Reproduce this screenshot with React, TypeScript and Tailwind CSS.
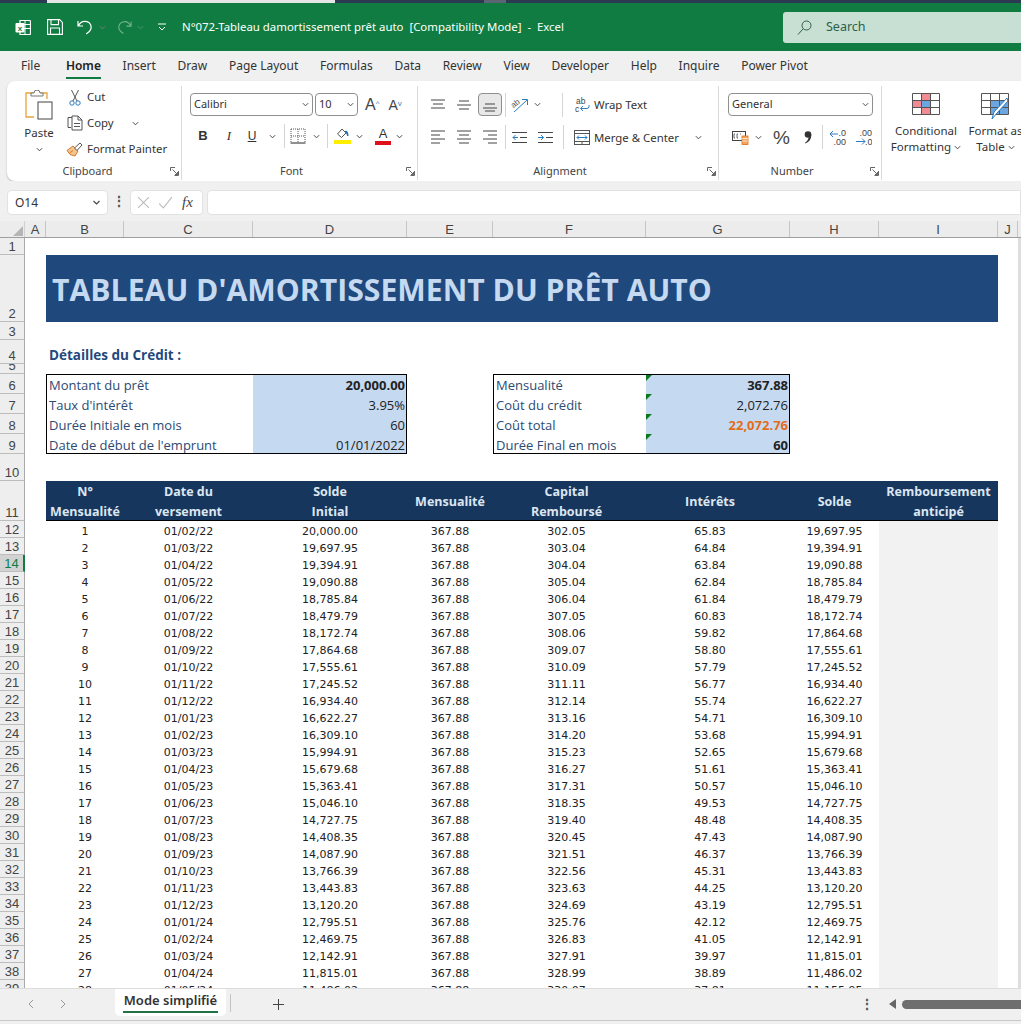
import type { ReactNode } from "react";

const UI = "font-['Noto_Sans',sans-serif]";
const COLS = "grid grid-cols-[25px_21px_78px_129px_154px_86px_153px_144px_89px_119px_20px] grid-rows-[minmax(0,1fr)]";

// n, date, opening, capital, interest, closing
const rows: [number, string, string, string, string, string][] = [
  [1, "01/02/22", "20,000.00", "302.05", "65.83", "19,697.95"],
  [2, "01/03/22", "19,697.95", "303.04", "64.84", "19,394.91"],
  [3, "01/04/22", "19,394.91", "304.04", "63.84", "19,090.88"],
  [4, "01/05/22", "19,090.88", "305.04", "62.84", "18,785.84"],
  [5, "01/06/22", "18,785.84", "306.04", "61.84", "18,479.79"],
  [6, "01/07/22", "18,479.79", "307.05", "60.83", "18,172.74"],
  [7, "01/08/22", "18,172.74", "308.06", "59.82", "17,864.68"],
  [8, "01/09/22", "17,864.68", "309.07", "58.80", "17,555.61"],
  [9, "01/10/22", "17,555.61", "310.09", "57.79", "17,245.52"],
  [10, "01/11/22", "17,245.52", "311.11", "56.77", "16,934.40"],
  [11, "01/12/22", "16,934.40", "312.14", "55.74", "16,622.27"],
  [12, "01/01/23", "16,622.27", "313.16", "54.71", "16,309.10"],
  [13, "01/02/23", "16,309.10", "314.20", "53.68", "15,994.91"],
  [14, "01/03/23", "15,994.91", "315.23", "52.65", "15,679.68"],
  [15, "01/04/23", "15,679.68", "316.27", "51.61", "15,363.41"],
  [16, "01/05/23", "15,363.41", "317.31", "50.57", "15,046.10"],
  [17, "01/06/23", "15,046.10", "318.35", "49.53", "14,727.75"],
  [18, "01/07/23", "14,727.75", "319.40", "48.48", "14,408.35"],
  [19, "01/08/23", "14,408.35", "320.45", "47.43", "14,087.90"],
  [20, "01/09/23", "14,087.90", "321.51", "46.37", "13,766.39"],
  [21, "01/10/23", "13,766.39", "322.56", "45.31", "13,443.83"],
  [22, "01/11/23", "13,443.83", "323.63", "44.25", "13,120.20"],
  [23, "01/12/23", "13,120.20", "324.69", "43.19", "12,795.51"],
  [24, "01/01/24", "12,795.51", "325.76", "42.12", "12,469.75"],
  [25, "01/02/24", "12,469.75", "326.83", "41.05", "12,142.91"],
  [26, "01/03/24", "12,142.91", "327.91", "39.97", "11,815.01"],
  [27, "01/04/24", "11,815.01", "328.99", "38.89", "11,486.02"],
  [28, "01/05/24", "11,486.02", "330.07", "37.81", "11,155.95"],
];

const tabs = ["File", "Home", "Insert", "Draw", "Page Layout", "Formulas", "Data", "Review", "View", "Developer", "Help", "Inquire", "Power Pivot"];

function Chev({ className = "" }: { className?: string }) {
  return (
    <svg viewBox="0 0 8 5" className={`w-[7px] h-[5px] shrink-0 ${className}`} fill="none" stroke="#444" strokeWidth="1.1">
      <path d="M1 1l3 3 3-3" />
    </svg>
  );
}

function Launcher() {
  return (
    <svg viewBox="0 0 9 9" className="absolute right-[2px] bottom-[4px] w-[9px] h-[9px]" fill="none" stroke="#555" strokeWidth="0.9">
      <path d="M8.5 4V8.5H4.5M.5 4V.5H5M2.5 2.5L7.5 7.5M5 7.5H7.5V5" />
    </svg>
  );
}

function Sep({ h = "h-[26px]" }: { h?: string }) {
  return <div className={`w-px bg-[#d4d4d4] shrink-0 ${h}`} />;
}

function Lines({ kind, y = "" }: { kind: string; y?: string }) {
  const d: Record<string, string> = {
    top: "M1 2h14M3 6h10M1 10h14",
    mid: "M3 3h10M1 7h14M3 11h10",
    bot: "M3 6h10M1 10h14M3 13h10",
    left: "M1 1h14M1 5h9M1 9h14M1 13h9",
    center: "M1 1h14M3 5h10M1 9h14M3 13h10",
    right: "M1 1h14M6 5h9M1 9h14M6 13h9",
  };
  return (
    <svg viewBox="0 0 16 14" className={`w-[16px] h-[14px] ${y}`} fill="none" stroke="#444" strokeWidth="1">
      <path d={d[kind]} />
    </svg>
  );
}

function Group({ w, label, pr, children }: { w: string; label: string; pr: string; children: ReactNode }) {
  return (
    <div className={`relative h-full flex flex-col shrink-0 border-r border-[#dadada] ${w}`}>
      <div className="flex-1 min-h-0">{children}</div>
      <div className={`h-[21px] text-center text-[11px] leading-[23px] text-[#444] ${pr}`}>{label}</div>
      <Launcher />
    </div>
  );
}

function TitleBar() {
  return (
    <div className="h-[51px] shrink-0 flex flex-col">
      <div className="h-[3px] bg-[#2b3a50] flex">
        <div className="ml-[47px] w-[288px] bg-[#e6e6e6]" />
        <div className="ml-[149px] w-[22px] bg-[#5b6472]" />
      </div>
      <div className="flex-1 bg-[#107c41] flex items-center text-white">
        <svg viewBox="0 0 16 17" className="ml-[15px] w-[16px] h-[17px]">
          <path d="M5 1.5h9.5a1 1 0 0 1 1 1v12a1 1 0 0 1-1 1H5z" fill="none" stroke="#fff" strokeWidth="1.2" />
          <path d="M5 5.5h10M5 9.5h10M10 1.5v14" stroke="#fff" strokeWidth="1" />
          <rect x="0.5" y="4" width="9" height="9.5" rx="1" fill="#fff" />
          <text x="5" y="11.5" textAnchor="middle" fontSize="8" fontFamily="Liberation Sans" fontWeight="700" fill="#107c41">x</text>
        </svg>
        <svg viewBox="0 0 16 16" className="ml-[16px] w-[16px] h-[16px]" fill="none" stroke="#fff" strokeWidth="1.1">
          <path d="M.6.6h12l2.8 2.8v12H.6zM4 .6v5h7.5v-5M3.500 15.400V9h9v6.400" />
        </svg>
        <svg viewBox="0 0 16 16" className="ml-[14px] w-[16px] h-[16px]" fill="none" stroke="#fff" strokeWidth="1.2">
          <path d="M1 2v5h5M1.300 7C3 3.500 6.500 1.700 10 2.700c3.500 1 5 4.600 3.700 7.700-.8 1.900-2.500 3.300-4.500 4.600" />
        </svg>
        <Chev className="ml-[6px] invert brightness-200" />
        <svg viewBox="0 0 16 16" className="ml-[11px] w-[15px] h-[16px] opacity-40" fill="none" stroke="#fff" strokeWidth="1.2">
          <path d="M15 2v5h-5M14.700 7C13 3.500 9.500 1.700 6 2.700c-3.500 1-5 4.600-3.700 7.700.8 1.900 2.500 3.300 4.500 4.600" />
        </svg>
        <Chev className="ml-[5px] invert opacity-40" />
        <svg viewBox="0 0 8 8" className="ml-[14px] w-[8px] h-[8px]" fill="none" stroke="#fff" strokeWidth="1">
          <path d="M0 1h8M1 4l3 3 3-3" />
        </svg>
        <span className={`ml-[16px] text-[11.400px] whitespace-pre ${UI}`}>N°072-Tableau damortissement prêt auto  [Compatibility Mode]  -  Excel</span>
        <div className="ml-auto w-[238px] h-[31px] bg-[#c7e0d3] rounded-l-[3px] flex items-center text-[#2c5f49]">
          <svg viewBox="0 0 15 15" className="ml-[14px] w-[15px] h-[15px]" fill="none" stroke="#2c5f49" strokeWidth="1">
            <circle cx="9.500" cy="5.500" r="4.500" />
            <path d="M6 9l-5 5.500" />
          </svg>
          <span className={`ml-[14px] text-[12.500px] ${UI}`}>Search</span>
        </div>
      </div>
    </div>
  );
}

function TabStrip() {
  return (
    <div className={`h-[30px] shrink-0 bg-[#f0f0f0] flex items-start pt-[6px] pl-[21px] gap-[21.700px] text-[12px] text-[#333] ${UI}`}>
      {tabs.map((t) => (
        <div key={t} className={`h-[22px] leading-[18px] whitespace-nowrap ${t === "Home" ? "font-semibold text-[#222] border-b-2 border-[#107c41] ml-[4px]" : ""}`}>
          {t}
        </div>
      ))}
    </div>
  );
}

function Ribbon() {
  return (
    <div className="h-[100px] shrink-0 bg-[#f0f0f0] pl-[7px]">
      <div className={`h-[100px] bg-white rounded-l-[8px] flex pt-[5px] pb-[1px] shadow-[0_1px_2px_rgba(0,0,0,0.25)] text-[#333] ${UI}`}>
        <Group w="w-[175px]" label="Clipboard" pr="pr-[13px]">
          <div className="flex h-full">
            <div className="w-[52px] ml-[6px] flex flex-col items-center pt-[4px]">
              <svg viewBox="0 0 28 30" className="w-[28px] h-[30px]" fill="none">
                <path d="M9 3H1v24h8" stroke="#e8a33d" strokeWidth="1.300" />
                <path d="M15 3h7v6" stroke="#e8a33d" strokeWidth="1.300" />
                <path d="M6 6V3h3a3 3 0 0 1 6 0h3v3z" fill="#fff" stroke="#777" strokeWidth="1" />
                <rect x="13" y="12" width="14" height="17" fill="#fff" stroke="#444" strokeWidth="1" />
              </svg>
              <span className="text-[11.500px] mt-[5px] leading-[16px]">Paste</span>
              <Chev className="mt-[6px]" />
            </div>
            <div className="flex flex-col ml-[1px] pt-[1px] text-[11.400px] gap-[6px]">
              <div className="flex items-center h-[20px]">
                <svg viewBox="0 0 12 17" className="w-[12px] h-[17px] ml-[3px]" fill="none" strokeWidth="1">
                  <circle cx="3" cy="14" r="2.200" stroke="#2a7cc2" />
                  <circle cx="9" cy="14" r="2.200" stroke="#2a7cc2" />
                  <path d="M4 12L9.500 1M8 12L2.500 1" stroke="#555" />
                </svg>
                <span className="ml-[6px]">Cut</span>
              </div>
              <div className="flex items-center h-[20px]">
                <svg viewBox="0 0 16 16" className="w-[16px] h-[16px] ml-[1px]" fill="none" stroke="#555" strokeWidth="1">
                  <path d="M5 2.500H1v10h3M5 1h6l4 4v10H5zM11 1v4h4M7 8.500h6M7 11.500h6" />
                </svg>
                <span className="ml-[4px]">Copy</span>
                <Chev className="ml-[18px]" />
              </div>
              <div className="flex items-center h-[20px]">
                <svg viewBox="0 0 17 15" className="w-[17px] h-[15px]" fill="none">
                  <path d="M1 8.500l6-4.500 5 5-3 5-5-1.500z" fill="#f4c48d" stroke="#d97b28" strokeWidth="1" />
                  <path d="M3.500 11L7 8.500" stroke="#d97b28" strokeWidth="1" />
                  <path d="M8.500 6l5.500-5 2 2-5 5.500z" fill="#fff" stroke="#555" strokeWidth="1" />
                </svg>
                <span className="ml-[4px]">Format Painter</span>
              </div>
            </div>
          </div>
        </Group>

        <Group w="w-[236px]" label="Font" pr="pr-[16px]">
          <div className="pl-[8px] pt-[7px] flex flex-col gap-[7px]">
            <div className="flex items-center">
              <div className="w-[123px] h-[23px] border border-[#8f8f8f] rounded-[4px] flex items-center justify-between px-[3px] text-[11px]">
                Calibri <Chev />
              </div>
              <div className="ml-[2px] w-[43px] h-[23px] border border-[#8f8f8f] rounded-[4px] flex items-center justify-between px-[3px] text-[11px]">
                10 <Chev />
              </div>
              <span className="ml-[7px] text-[16px] leading-none font-['Liberation_Sans',sans-serif] text-[#444]">A<sup className="text-[8px] text-[#3a7cc2]">^</sup></span>
              <span className="ml-[9px] text-[14px] leading-none font-['Liberation_Sans',sans-serif] text-[#444]">A<sup className="text-[8px] text-[#3a7cc2]">v</sup></span>
            </div>
            <div className="flex items-center h-[26px]">
              <span className="w-[26px] text-center font-['Liberation_Sans',sans-serif] font-bold text-[13px]">B</span>
              <span className="w-[26px] text-center font-['Liberation_Serif',serif] italic text-[13px]">I</span>
              <span className="w-[20px] text-center font-['Liberation_Sans',sans-serif] underline text-[12px]">U</span>
              <Chev className="ml-[7px]" />
              <Sep h="h-[24px] ml-[8px]" />
              <svg viewBox="0 0 16 16" className="w-[16px] h-[16px] ml-[5px]" fill="none" stroke="#555" strokeWidth="1">
                <path d="M1 1h14M1 8h14M8 1v14M1 1v14M15 1v14" strokeDasharray="1 1" />
                <path d="M.5 15h15" stroke="#222" />
              </svg>
              <Chev className="ml-[7px]" />
              <Sep h="h-[24px] ml-[7px]" />
              <div className="ml-[6px] w-[17px] flex flex-col items-center">
                <svg viewBox="0 0 14 11" className="w-[14px] h-[11px]" fill="none">
                  <path d="M1.500 6L6 1l4 4-4.500 4.500z" stroke="#555" strokeWidth="1" />
                  <path d="M9 3c2-1 3.500 1 3.500 5h-1.500c0-1.500-.5-3-2-3z" fill="#2a6fb8" />
                </svg>
                <div className="w-[17px] h-[4px] bg-[#ffee00] mt-[1px]" />
              </div>
              <Chev className="ml-[5px]" />
              <div className="ml-[12px] w-[16px] flex flex-col items-center">
                <span className="text-[13px] leading-[12px] font-['Liberation_Sans',sans-serif]">A</span>
                <div className="w-[16px] h-[4px] bg-[#e0101a] mt-[1px]" />
              </div>
              <Chev className="ml-[5px]" />
            </div>
          </div>
        </Group>

        <Group w="w-[301px]" label="Alignment" pr="pr-[16px]">
          <div className="pl-[12px] pt-[7px] flex flex-col gap-[8px]">
            <div className="flex items-center h-[23px]">
              <Lines kind="top" />
              <Lines kind="mid" y="ml-[10px]" />
              <div className="ml-[6px] w-[24px] h-[23px] border border-[#8f8f8f] bg-[#e8e8e8] rounded-[4px] flex items-center justify-center"><Lines kind="bot" /></div>
              <Sep h="h-[24px] ml-[3px]" />
              <svg viewBox="0 0 18 16" className="w-[18px] h-[16px] ml-[5px]" fill="none">
                <path d="M3 15L16 3M11 2.500h5.500V8" stroke="#2a7cc2" strokeWidth="1" />
                <text x="1" y="9" fontSize="8" fill="#555" transform="rotate(-40 5 8)" fontFamily="Liberation Sans">ab</text>
              </svg>
              <Chev className="ml-[5px]" />
              <Sep h="h-[24px] ml-[21px]" />
              <svg viewBox="0 0 15 16" className="w-[15px] h-[16px] ml-[12px]" fill="none">
                <text x="1" y="7" fontSize="8.500" fill="#444" fontFamily="Liberation Sans">ab</text>
                <text x="0" y="15" fontSize="8.500" fill="#444" fontFamily="Liberation Sans">c</text>
                <path d="M14 8v1.500a2 2 0 0 1-2 2H6M8 9l-2.500 2.500L8 14" stroke="#2a7cc2" strokeWidth="1" />
              </svg>
              <span className="ml-[4px] text-[11.400px] pt-[1px]">Wrap Text</span>
            </div>
            <div className="flex items-center h-[26px]">
              <Lines kind="left" />
              <Lines kind="center" y="ml-[10px]" />
              <Lines kind="right" y="ml-[10px]" />
              <Sep h="h-[24px] ml-[7px]" />
              <svg viewBox="0 0 15 11" className="w-[15px] h-[11px] ml-[6px]" fill="none" stroke="#444" strokeWidth="1">
                <path d="M0 .5h15M8 5.500h7M0 10.500h15" />
                <path d="M6 5.500H1M3.500 3L1 5.500 3.500 8" stroke="#2a7cc2" />
              </svg>
              <svg viewBox="0 0 15 11" className="w-[15px] h-[11px] ml-[11px]" fill="none" stroke="#444" strokeWidth="1">
                <path d="M0 .5h15M8 5.500h7M0 10.500h15" />
                <path d="M0 5.500h5.500M3 3l2.500 2.500L3 8" stroke="#2a7cc2" />
              </svg>
              <Sep h="h-[24px] ml-[10px]" />
              <svg viewBox="0 0 16 15" className="w-[16px] h-[15px] ml-[10px]" fill="none" stroke="#555" strokeWidth="1">
                <rect x="0.500" y="0.500" width="15" height="14" />
                <path d="M.5 3.500h15M.5 11.500h15M8 11.500v3" />
                <path d="M3 7.500h10M5 5.500l-2 2 2 2M11 5.500l2 2-2 2" stroke="#2a7cc2" />
              </svg>
              <span className="ml-[4px] text-[11.400px] pt-[1px]">Merge &amp; Center</span>
              <Chev className="ml-[16px]" />
            </div>
          </div>
        </Group>

        <Group w="w-[163px]" label="Number" pr="pr-[16px]">
          <div className="pl-[9px] pt-[7px] flex flex-col gap-[8px]">
            <div className="w-[145px] h-[23px] border border-[#8f8f8f] rounded-[4px] flex items-center justify-between px-[3px] text-[11px]">
              General <Chev />
            </div>
            <div className="flex items-center h-[26px] pl-[4px]">
              <svg viewBox="0 0 17 15" className="w-[17px] h-[15px]" fill="none">
                <rect x="0.500" y="1.500" width="13" height="9" stroke="#444" />
                <path d="M3 4H2v4h1M6 4H5v4h1M9 4H8" stroke="#444" strokeWidth="0.8" />
                <rect x="10" y="6" width="6" height="8.500" fill="#f6a55c" stroke="#d9701c" strokeWidth="0.8" />
                <path d="M10 8.500h6M10 11h6" stroke="#fff" strokeWidth="0.7" />
              </svg>
              <Chev className="ml-[6px]" />
              <span className="ml-[11px] w-[18px] text-[19px] leading-none font-['Liberation_Sans',sans-serif] text-[#444]">%</span>
              <svg viewBox="0 0 8 13" className="ml-[13px] w-[8px] h-[13px]" fill="#333">
                <circle cx="4" cy="3.500" r="3.300" />
                <path d="M7.300 3.500C7.500 8 5 11 1.500 12.500L1 11.800C3.500 10 4.500 8 4.500 6.500z" />
              </svg>
              <Sep h="h-[24px] ml-[10px]" />
              <svg viewBox="0 0 17 17" className="ml-[6px] w-[17px] h-[17px]" fill="none">
                <path d="M9 5H1M4 2L1 5l3 3" stroke="#2a7cc2" strokeWidth="1" />
                <text x="9.500" y="7" fontSize="9" fill="#444" fontFamily="Liberation Sans">.0</text>
                <text x="4.500" y="16" fontSize="9" fill="#444" fontFamily="Liberation Sans">.00</text>
              </svg>
              <svg viewBox="0 0 17 17" className="ml-[9px] w-[17px] h-[17px]" fill="none">
                <path d="M1 12.500h9M7 9.500l3 3-3 3" stroke="#2a7cc2" strokeWidth="1" />
                <text x="4.500" y="7" fontSize="9" fill="#444" fontFamily="Liberation Sans">.00</text>
                <text x="10" y="16" fontSize="9" fill="#444" fontFamily="Liberation Sans">.0</text>
              </svg>
            </div>
          </div>
        </Group>

        <div className="flex text-[11.500px] text-center leading-[16px] pt-[7px]">
          <div className="w-[88px] flex flex-col items-center">
            <svg viewBox="0 0 28 22" className="w-[28px] h-[22px]" fill="none">
              <path d="M9 1h10v7H9zM1 8h8v7H1zM9 15h10v6H9z" fill="#f28a95" />
              <path d="M9 8h9v7H9z" fill="#6ca6e0" />
              <path d="M.5.5h27v21H.5zM.5 7.500h27M.5 14.500h27M9.500.5v21M18.500.5v21" stroke="#555" strokeWidth="1" />
            </svg>
            <span className="mt-[8px]">Conditional</span>
            <span className="flex items-center gap-[3px]">Formatting <Chev /></span>
          </div>
          <div className="w-[51px] flex flex-col items-center">
            <svg viewBox="0 0 30 27" className="w-[30px] h-[27px] shrink-0" fill="none">
              <path d="M10 7h18v14H10z" fill="#6ca6e0" />
              <path d="M.5.5h27v21H.5zM.5 7.500h27M.5 14.500h27M9.500.5v21M18.500.5v21" stroke="#555" strokeWidth="1" />
              <path d="M27 8L16 20l-5 6 2-7L26 5z" fill="#fff" stroke="#2a7cc2" strokeWidth="1" />
            </svg>
            <span className="mt-[3px] whitespace-nowrap">Format as</span>
            <span className="flex items-center gap-[3px]">Table <Chev /></span>
          </div>
        </div>
      </div>
    </div>
  );
}

function FormulaBar() {
  return (
    <div className={`h-[40px] shrink-0 bg-[#f0f0f0] flex items-start pt-[9px] pl-[7px] ${UI}`}>
      <div className="w-[101px] h-[25px] bg-white rounded-[4px] border border-[#e2e2e2] flex items-center justify-between pl-[7px] pr-[6px] text-[12px] text-[#333]">
        O14 <Chev className="w-[9px]" />
      </div>
      <span className="w-[22px] text-center text-[14px] leading-[22px] font-bold text-[#555]">⋮</span>
      <div className="w-[73px] h-[25px] bg-white rounded-[4px] border border-[#e2e2e2] flex items-center pl-[6px] font-['Liberation_Serif',serif]">
        <svg viewBox="0 0 12 12" className="w-[13px] h-[13px]" fill="none" stroke="#bcbcbc" strokeWidth="1"><path d="M1 1l10 10M11 1L1 11" /></svg>
        <svg viewBox="0 0 14 12" className="ml-[8px] w-[15px] h-[13px]" fill="none" stroke="#bcbcbc" strokeWidth="1"><path d="M1 7l4 4 8-10" /></svg>
        <span className="ml-[9px] italic text-[15px] text-[#444]">fx</span>
      </div>
      <div className="ml-[4px] flex-1 h-[25px] bg-white rounded-l-[4px] border border-[#e2e2e2]" />
    </div>
  );
}

function RowHead({ n, active = false, className = "" }: { n: number; active?: boolean; className?: string }) {
  return (
    <div className={`flex items-end justify-center overflow-hidden border-b border-[#bdbdbd] text-[13px] leading-[14px] font-['Liberation_Sans',sans-serif] ${active ? "bg-[#d2d2d2] text-[#107c41] border-r-2 border-r-[#107c41]" : "bg-[#eeeeee] text-[#444] border-r border-r-[#aaaaaa]"} ${className}`}>
      {n}
    </div>
  );
}

function ColHeaders() {
  const cols = ["A", "B", "C", "D", "E", "F", "G", "H", "I", "J"];
  return (
    <div className={`${COLS} h-[17px] shrink-0 bg-[#ececec] border-b border-[#9e9e9e] text-[13px] leading-[18px] text-[#444] font-['Liberation_Sans',sans-serif]`}>
      <div className="flex items-end justify-end pr-[1px] pb-[1px] border-r border-[#d0d0d0]">
        <div className="w-0 h-0 border-l-[10px] border-l-transparent border-b-[10px] border-b-[#b5b5b5]" />
      </div>
      {cols.map((c) => (
        <div key={c} className="text-center border-r border-[#c6c6c6]">{c}</div>
      ))}
    </div>
  );
}

function Triangle() {
  return <div className="absolute left-0 top-0 w-0 h-0 border-t-[6px] border-t-[#0a7a1e] border-r-[6px] border-r-transparent" />;
}

// one row of the two detail boxes
function DetailRow({ n, left, lv, right, rv, first = false, last = false, lvClass = "", rvClass = "" }: {
  n: number; left: string; lv: string; right: string; rv: string; first?: boolean; last?: boolean; lvClass?: string; rvClass?: string;
}) {
  const edge = `${first ? "border-t" : ""} ${last ? "border-b" : ""} border-black`;
  const lead = first ? "leading-[20px]" : "leading-[22px]";
  return (
    <div className={`${COLS} h-[20px] font-['Open_Sans',sans-serif] text-[13px] ${lead}`}>
      <RowHead n={n} />
      <div />
      <div className={`col-span-2 border-l pl-[2px] whitespace-nowrap text-[#2c4a73] ${edge}`}>{left}</div>
      <div className={`bg-[#c5d9f1] text-right pr-[1px] border-r text-[#222] ${edge} ${lvClass}`}>{lv}</div>
      <div />
      <div className={`border-l pl-[2px] whitespace-nowrap text-[#2c4a73] ${edge}`}>{right}</div>
      <div className={`relative bg-[#c5d9f1] text-right pr-[1px] border-r text-[#222] ${edge} ${rvClass}`}>
        <Triangle />
        {rv}
      </div>
    </div>
  );
}

function Sheet() {
  return (
    <div className="flex-1 min-h-0 flex flex-col overflow-hidden bg-white">
      <ColHeaders />
      <div className="flex-1 min-h-0 overflow-hidden border-r-[3px] border-[#dedede]">
        <div className={`${COLS} h-[17px]`}><RowHead n={1} /></div>
        <div className={`${COLS} h-[67px]`}>
          <RowHead n={2} />
          <div />
          <div className="col-span-8 bg-[#1f497d] flex items-center pl-[6px] pt-[3px] text-[#c5d9f1] text-[30.200px] font-bold font-['Open_Sans',sans-serif] whitespace-nowrap">
            TABLEAU D'AMORTISSEMENT DU PRÊT AUTO
          </div>
        </div>
        <div className={`${COLS} h-[18px]`}><RowHead n={3} /></div>
        <div className={`${COLS} h-[24px]`}>
          <RowHead n={4} />
          <div />
          <div className="col-span-3 pl-[3px] pt-[6px] text-[13.500px] leading-[18px] font-bold text-[#1f497d] font-['Open_Sans',sans-serif]">Détailles du Crédit :</div>
        </div>
        <div className={`${COLS} h-[10px]`}><RowHead n={5} className="text-[10px] leading-[8px]" /></div>
        <DetailRow n={6} first left="Montant du prêt" lv="20,000.00" lvClass="font-bold" right="Mensualité" rv="367.88" rvClass="font-bold" />
        <DetailRow n={7} left="Taux d'intérêt" lv="3.95%" right="Coût du crédit" rv="2,072.76" />
        <DetailRow n={8} left="Durée Initiale en mois" lv="60" right="Coût total" rv="22,072.76" rvClass="font-bold text-[#e36c1a]" />
        <DetailRow n={9} last left="Date de début de l'emprunt" lv="01/01/2022" right="Durée Final en mois" rv="60" rvClass="font-bold" />
        <div className={`${COLS} h-[27px]`}><RowHead n={10} /></div>
        <div className={`${COLS} h-[40px]`}>
          <RowHead n={11} />
          <div />
          <div className="col-span-8 grid grid-cols-[78px_129px_154px_86px_153px_144px_89px_119px] bg-[#17365d] border-b border-black pt-[1px] text-center text-[12.500px] leading-[20px] font-bold text-[#dce6f1] font-['Open_Sans',sans-serif]">
            <div>N°<br />Mensualité</div>
            <div>Date du<br />versement</div>
            <div>Solde<br />Initial</div>
            <div className="self-center">Mensualité</div>
            <div className="pr-[6px]">Capital<br />Remboursé</div>
            <div className="self-center pr-[16px]">Intérêts</div>
            <div className="self-center">Solde</div>
            <div>Remboursement<br />anticipé</div>
          </div>
        </div>
        {rows.map((r, i) => (
          <div key={r[0]} className={`${COLS} h-[17px] text-center text-[11px] leading-[21px] text-[#222] font-['DejaVu_Sans',sans-serif]`}>
            <RowHead n={i + 12} active={i + 12 === 14} />
            <div />
            <div>{r[0]}</div>
            <div>{r[1]}</div>
            <div>{r[2]}</div>
            <div>367.88</div>
            <div className="pr-[6px]">{r[3]}</div>
            <div className="pr-[16px]">{r[4]}</div>
            <div>{r[5]}</div>
            <div className="bg-[#f2f2f2]" />
          </div>
        ))}
      </div>
    </div>
  );
}

function SheetTabs() {
  return (
    <div className={`h-[36px] shrink-0 bg-[#f0f0f0] border-t border-[#dcdcdc] ${UI}`}>
      <div className="h-[31px] flex items-start border-b border-[#c8c8c8] box-content">
        <svg viewBox="0 0 6 10" className="ml-[28px] mt-[10px] w-[6px] h-[10px]" fill="none" stroke="#999" strokeWidth="1"><path d="M5 1L1 5l4 4" /></svg>
        <svg viewBox="0 0 6 10" className="ml-[26px] mt-[10px] w-[6px] h-[10px]" fill="none" stroke="#999" strokeWidth="1"><path d="M1 1l4 4-4 4" /></svg>
        <div className="ml-[49px] w-[111px] h-[27px] bg-white rounded-b-[5px] flex flex-col items-center pt-[2px] text-[13px] font-semibold text-[#333] leading-[18px]">
          Mode simplifié
          <div className="w-[95px] h-[2px] bg-[#217346] mt-[2px]" />
        </div>
        <div className="ml-[4px] mt-[5px] w-px h-[18px] bg-[#c4c4c4]" />
        <svg viewBox="0 0 11 11" className="ml-[42px] mt-[10px] w-[11px] h-[11px]" fill="none" stroke="#444" strokeWidth="1"><path d="M5.500 0v11M0 5.500h11" /></svg>
        <div className="ml-auto mt-[9px] flex items-center">
          <span className="text-[14px] leading-[12px] font-bold text-[#555]">⋮</span>
          <div className="ml-[15px] w-0 h-0 border-y-[5px] border-y-transparent border-r-[7px] border-r-[#666]" />
          <div className="ml-[6px] w-[119px] h-[9px] bg-[#6e6e6e] rounded-l-[5px]" />
        </div>
      </div>
    </div>
  );
}

export default function App() {
  return (
    <div className="w-[1021px] h-[1024px] overflow-hidden flex flex-col bg-[#f0f0f0]">
      <TitleBar />
      <TabStrip />
      <Ribbon />
      <FormulaBar />
      <Sheet />
      <SheetTabs />
    </div>
  );
}
